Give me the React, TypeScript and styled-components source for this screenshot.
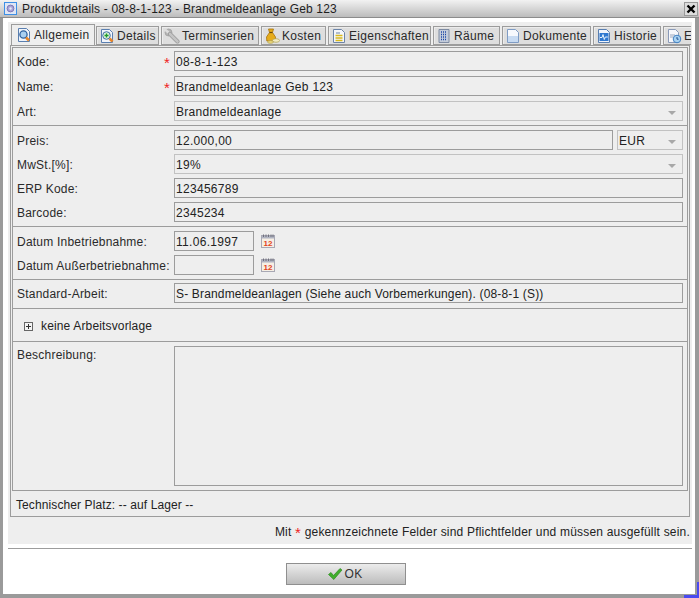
import React from "react";
import styled, { createGlobalStyle } from "styled-components";

const Global = createGlobalStyle`
  html, body { margin: 0; padding: 0; background: #fff; overflow: hidden; }
  * { box-sizing: border-box; }
`;

const Win = styled.div`
  position: relative;
  width: 699px;
  height: 598px;
  background: #fff;
  border: solid #9a9a9a;
  border-width: 0 4px 4px 3px;
  font-family: "Liberation Sans", Arial, sans-serif;
  font-size: 12px;
  letter-spacing: 0.3px;
  color: #222;
  display: flex;
  flex-direction: column;
`;
const TitleBar = styled.div`
  height: 18px;
  margin: 0 -4px 0 -3px;
  padding: 0 1px 0 4px;
  background: linear-gradient(#f2f2f2, #bcbcbc);
  border-bottom: 1px solid #8c8c8c;
  display: flex;
  align-items: center;
  gap: 5px;
  flex: none;
`;
const TitleIcon = styled.span`
  width: 13px;
  height: 13px;
  border: 1px solid #3d8fe6;
  background: #dfe6f5;
  display: flex;
  align-items: center;
  justify-content: center;
  flex: none;
`;
const TitleText = styled.span`
  flex: 1;
  color: #1e1e1e;
  letter-spacing: 0.16px;
`;
const CloseBtn = styled.span`
  width: 14px;
  height: 14px;
  background: #dcdcdc;
  border: 1px solid #9a9a9a;
  display: flex;
  align-items: center;
  justify-content: center;
  flex: none;
`;
const Corner = styled.div`
  position: absolute;
  right: -4px;
  bottom: -4px;
  width: 15px;
  height: 16px;
  border: solid #4a4af0;
  border-width: 0 2px 3px 0;
`;
const Gray = styled.div`
  margin: 4px 3px 0 5px;
  height: 522px;
  background: #eeeeee;
  padding: 2px 2px 0 2px;
  display: flex;
  flex-direction: column;
  flex: none;
`;
const TabStrip = styled.div`
  display: flex;
  gap: 2px;
  align-items: flex-end;
  height: 21px;
  margin: 0 -1px 0 1px;
  overflow: hidden;
  flex: none;
`;
const Tab = styled.div<{ $w: number; $active?: boolean }>`
  width: ${(p) => p.$w}px;
  flex: none;
  height: ${(p) => (p.$active ? 21 : 19)}px;
  display: flex;
  align-items: center;
  gap: 2px;
  padding-left: ${(p) => (p.$active ? 4 : 2)}px;
  border: 1px solid #9c9c9c;
  border-bottom: ${(p) => (p.$active ? "none" : "1px solid #9c9c9c")};
  background: ${(p) => (p.$active ? "#eeeeee" : "#dedede")};
  box-shadow: ${(p) => (p.$active ? "none" : "inset 1px 1px 0 #ececec")};
  white-space: nowrap;
  overflow: hidden;
  color: #2a2a2a;
  margin-right: ${(p) => (p.$active ? -1 : 0)}px;
`;
const TabIconSvg = styled.svg`
  width: 16px;
  height: 16px;
  flex: none;
`;
const Outer = styled.div`
  width: 680px;
  height: 472px;
  border: 1px solid #9c9c9c;
  padding: 1px 1px 0 1px;
  display: flex;
  flex-direction: column;
  flex: none;
`;
const Inner = styled.div`
  height: 444px;
  border: 1px solid #9c9c9c;
  padding: 0 4px;
  flex: none;
  display: flex;
  flex-direction: column;
`;
const Section = styled.div<{ $gap: number; $pt: number; $pb: number; $last?: boolean }>`
  display: flex;
  flex-direction: column;
  gap: ${(p) => p.$gap}px;
  padding: ${(p) => p.$pt}px 4px ${(p) => p.$pb}px;
  margin: 0 -4px;
  border-bottom: ${(p) => (p.$last ? "none" : "1px solid #9c9c9c")};
`;
const Row = styled.div<{ $h?: number }>`
  display: flex;
  align-items: ${(p) => (p.$h ? "flex-start" : "center")};
  height: ${(p) => p.$h ?? 20}px;
`;
const Label = styled.div`
  width: 157px;
  flex: none;
  display: flex;
  justify-content: space-between;
  white-space: nowrap;
  color: #2a2a2a;
  letter-spacing: 0.22px;
  padding-top: 2px;
`;
const Star = styled.span<{ $inline?: boolean }>`
  color: #ee2222;
  font-size: 15px;
  line-height: 12px;
  margin-top: 2px;
  vertical-align: -2px;
  margin-right: ${(p) => (p.$inline ? 0 : 4)}px;
`;
const Field = styled.div<{ $w?: number; $off?: boolean; $ml?: number; $ls?: number }>`
  ${(p) => (p.$w ? `width: ${p.$w}px; flex: none;` : "flex: 1;")}
  height: 100%;
  margin-left: ${(p) => p.$ml ?? 0}px;
  border: 1px solid ${(p) => (p.$off ? "#c2c2c2" : "#9c9c9c")};
  display: flex;
  align-items: center;
  justify-content: space-between;
  padding: 2px 6px 0 1px;
  white-space: nowrap;
  color: #222;
  background: #eeeeee;
  letter-spacing: ${(p) => p.$ls ?? 0.3}px;
`;
const Arrow = styled.span`
  width: 0;
  height: 0;
  border-left: 4px solid transparent;
  border-right: 4px solid transparent;
  border-top: 4px solid #a8a8a8;
  margin-top: 1px;
`;
const CalSvg = styled.svg`
  width: 16px;
  height: 16px;
  margin-left: 6px;
  flex: none;
`;
const Tree = styled.div`
  height: 24px;
  display: flex;
  align-items: center;
  padding-left: 7px;
  gap: 8px;
  margin-top: 1px;
  letter-spacing: 0.15px;
`;
const Plus = styled.span`
  width: 9px;
  height: 9px;
  border: 1px solid #666;
  background: #f4f4f4;
  position: relative;
  flex: none;
  &::before { content: ""; position: absolute; left: 1px; right: 1px; top: 3px; height: 1px; background: #333; }
  &::after { content: ""; position: absolute; top: 1px; bottom: 1px; left: 3px; width: 1px; background: #333; }
`;
const Footer = styled.div`
  height: 26px;
  display: flex;
  align-items: center;
  padding: 1px 0 0 4px;
  flex: none;
  letter-spacing: 0.1px;
`;
const Hint = styled.div`
  flex: 1;
  text-align: right;
  padding-top: 8px;
  letter-spacing: 0.2px;
  white-space: pre;
`;
const Rule = styled.div`
  height: 1px;
  background: #9c9c9c;
  margin: 4px 3px 0 5px;
  flex: none;
`;
const Actions = styled.div`
  flex: 1;
  display: flex;
  justify-content: center;
  padding-top: 14px;
  padding-right: 6px;
`;
const OkBtn = styled.div`
  width: 120px;
  height: 22px;
  border: 1px solid #8f8f8f;
  background: linear-gradient(#ececec, #bcbcbc);
  display: flex;
  align-items: center;
  justify-content: center;
  gap: 2px;
  color: #333;
  padding-right: 3px;
`;

type IconName = "allgemein" | "details" | "wrench" | "bag" | "props" | "rooms" | "doc" | "hist" | "ext";

const pageOutline = "M2.5 1.5h8l3 3v10h-11z";

function TabIcon({ name }: { name: IconName }) {
  return (
    <TabIconSvg viewBox="0 0 16 16">
      {name === "allgemein" && (
        <>
          <path d={pageOutline} fill="#f0f4fb" stroke="#5a7fb0" />
          <circle cx="7.5" cy="7.5" r="3.6" fill="#a9cff0" stroke="#2f62a0" strokeWidth="1.3" />
          <path d="M10 10.5l3 3" stroke="#e8862a" strokeWidth="2.6" />
        </>
      )}
      {name === "details" && (
        <>
          <path d={pageOutline} fill="#f0f4fb" stroke="#5a7fb0" />
          <circle cx="7.5" cy="7.5" r="3.8" fill="#d9f0d4" stroke="#3f6fa8" />
          <path d="M7.5 5.5v4M5.5 7.5h4" stroke="#1c9a2c" strokeWidth="1.3" />
          <path d="M10.5 10.5l3 3" stroke="#e8862a" strokeWidth="2.6" />
        </>
      )}
      {name === "wrench" && (
        <>
          <circle cx="4.5" cy="4.5" r="3.5" fill="#b4b4b4" stroke="#979797" strokeWidth="0.6" />
          <path d="M1 1.5l3.5 3" stroke="#dedede" strokeWidth="2.4" />
          <path d="M6 6l7.5 7.5" stroke="#979797" strokeWidth="4" strokeLinecap="round" />
          <path d="M6 6l7.5 7.5" stroke="#c4c4c4" strokeWidth="2.6" strokeLinecap="round" />
        </>
      )}
      {name === "bag" && (
        <>
          <path d="M4.5 1h5l-1 3.5 3 4.5-.3 4H2.8l-.3-4 3-4.5z" fill="#e6ac1a" stroke="#a8750f" strokeWidth="0.8" />
          <path d="M5.5 4.5h3" stroke="#6d4807" strokeWidth="1.2" />
          <ellipse cx="12" cy="12.5" rx="3.5" ry="1.8" fill="#f2ecc4" stroke="#b0a050" strokeWidth="0.7" />
          <ellipse cx="6.5" cy="14" rx="3" ry="1.4" fill="#ecd778" stroke="#a89a50" strokeWidth="0.6" />
        </>
      )}
      {name === "props" && (
        <>
          <path d={pageOutline} fill="#f4f6fb" stroke="#6c84a8" />
          <path d="M5 5h4" stroke="#6c84a8" />
          <path d="M4.5 7.5h7M4.5 10h7M4.5 12.5h7" stroke="#d8b91c" strokeWidth="1.6" />
        </>
      )}
      {name === "rooms" && (
        <>
          <path d="M3 1.5h10v13H3z" fill="#c4ccda" stroke="#7f8ca3" />
          <path d="M5 4h6M5 6.5h6M5 9h6M5 11.5h6" stroke="#1f4aa8" strokeWidth="1.6" strokeDasharray="1 1" />
        </>
      )}
      {name === "doc" && (
        <>
          <path d={pageOutline} fill="#f7f9fd" stroke="#7f9cc4" />
          <path d="M3 8h10v6H3z" fill="#c8dbf2" />
        </>
      )}
      {name === "hist" && (
        <>
          <path d={pageOutline} fill="#f0f4fb" stroke="#5a7fb0" />
          <path d="M3.5 5h9v8h-9z" fill="#2f78d0" />
          <path d="M4 9.5h2l1-3 1.3 5 1-2.5h2.5" stroke="#e8f4ff" fill="none" />
        </>
      )}
      {name === "ext" && (
        <>
          <path d="M2.5 1.5h7l3 3v10h-10z" fill="#f6f7fb" stroke="#8a9ab8" />
          <path d="M4 7h5M4 9h3" stroke="#9aa6bc" />
          <circle cx="11" cy="11" r="3.8" fill="#a9d2f2" stroke="#3f7fc0" />
          <path d="M11 9v2.2h1.6" stroke="#1f4f90" fill="none" />
        </>
      )}
    </TabIconSvg>
  );
}

function CalIcon() {
  return (
    <CalSvg viewBox="0 0 16 16">
      <rect x="1.5" y="2.5" width="13" height="12" fill="#f6efe4" stroke="#a8a8b4" />
      <rect x="2" y="3" width="12" height="2.5" fill="#b0b4c2" />
      <path d="M3.5 1.5v2.5M6 1.5v2.5M8.5 1.5v2.5M11 1.5v2.5M13 1.5v2.5" stroke="#70707c" />
      <text x="8" y="13" textAnchor="middle" fontSize="8" fontWeight="700" fill="#e2431c" fontFamily="Liberation Sans, sans-serif" letterSpacing="0">12</text>
    </CalSvg>
  );
}

const tabs: { label: string; icon: IconName; w: number; active?: boolean }[] = [
  { label: "Allgemein", icon: "allgemein", w: 84, active: true },
  { label: "Details", icon: "details", w: 63 },
  { label: "Terminserien", icon: "wrench", w: 98 },
  { label: "Kosten", icon: "bag", w: 65 },
  { label: "Eigenschaften", icon: "props", w: 103 },
  { label: "Räume", icon: "rooms", w: 67 },
  { label: "Dokumente", icon: "doc", w: 89 },
  { label: "Historie", icon: "hist", w: 68 },
  { label: "E", icon: "ext", w: 40 },
];

export default function App() {
  return (
    <>
      <Global />
      <Win>
        <TitleBar>
          <TitleIcon>
            <svg width="9" height="9" viewBox="0 0 9 9">
              <circle cx="4.5" cy="4.5" r="3.4" fill="#a9a4d8" stroke="#7d78b8" />
              <circle cx="4.5" cy="4.5" r="1.2" fill="#e8e8f4" />
            </svg>
          </TitleIcon>
          <TitleText>Produktdetails - 08-8-1-123 - Brandmeldeanlage Geb 123</TitleText>
          <CloseBtn>
            <svg width="10" height="10" viewBox="0 0 10 10">
              <path d="M1.5 1.5l7 7M8.5 1.5l-7 7" stroke="#000" strokeWidth="2.4" />
            </svg>
          </CloseBtn>
        </TitleBar>
        <Gray>
          <TabStrip>
            {tabs.map((t) => (
              <Tab key={t.label} $w={t.w} $active={t.active}>
                <TabIcon name={t.icon} />
                {t.label}
              </Tab>
            ))}
          </TabStrip>
          <Outer>
            <Inner>
              <Section $gap={5} $pt={3} $pb={4}>
                <Row>
                  <Label>Kode:<Star>*</Star></Label>
                  <Field>08-8-1-123</Field>
                </Row>
                <Row>
                  <Label>Name:<Star>*</Star></Label>
                  <Field>Brandmeldeanlage Geb 123</Field>
                </Row>
                <Row>
                  <Label>Art:</Label>
                  <Field $off>Brandmeldeanlage<Arrow /></Field>
                </Row>
              </Section>
              <Section $gap={4} $pt={4} $pb={4}>
                <Row>
                  <Label>Preis:</Label>
                  <Field>12.000,00</Field>
                  <Field $w={66} $off $ml={4}>EUR<Arrow /></Field>
                </Row>
                <Row>
                  <Label>MwSt.[%]:</Label>
                  <Field $off>19%<Arrow /></Field>
                </Row>
                <Row>
                  <Label>ERP Kode:</Label>
                  <Field>123456789</Field>
                </Row>
                <Row>
                  <Label>Barcode:</Label>
                  <Field>2345234</Field>
                </Row>
              </Section>
              <Section $gap={4} $pt={4} $pb={4}>
                <Row>
                  <Label>Datum Inbetriebnahme:</Label>
                  <Field $w={80}>11.06.1997</Field>
                  <CalIcon />
                </Row>
                <Row>
                  <Label>Datum Außerbetriebnahme:</Label>
                  <Field $w={80} />
                  <CalIcon />
                </Row>
              </Section>
              <Section $gap={0} $pt={3} $pb={5}>
                <Row>
                  <Label>Standard-Arbeit:</Label>
                  <Field $ls={0.16}>S- Brandmeldeanlagen (Siehe auch Vorbemerkungen). (08-8-1 (S))</Field>
                </Row>
              </Section>
              <Section $gap={0} $pt={4} $pb={3}>
                <Tree>
                  <Plus />
                  keine Arbeitsvorlage
                </Tree>
              </Section>
              <Section $gap={0} $pt={4} $pb={0} $last>
                <Row $h={140}>
                  <Label>Beschreibung:</Label>
                  <Field />
                </Row>
              </Section>
            </Inner>
            <Footer>Technischer Platz: -- auf Lager --</Footer>
          </Outer>
          <Hint>Mit <Star $inline>*</Star> gekennzeichnete Felder sind Pflichtfelder und müssen ausgefüllt sein.</Hint>
        </Gray>
        <Rule />
        <Actions>
          <OkBtn>
            <svg width="16" height="14" viewBox="0 0 16 14">
              <path d="M1.5 7.5l2.5-2 2.5 3L13 1.5l2 1.5-8.2 9.5z" fill="#3fae2c" stroke="#2c8a1e" strokeWidth="0.7" />
            </svg>
            OK
          </OkBtn>
        </Actions>
        <Corner />
      </Win>
    </>
  );
}
